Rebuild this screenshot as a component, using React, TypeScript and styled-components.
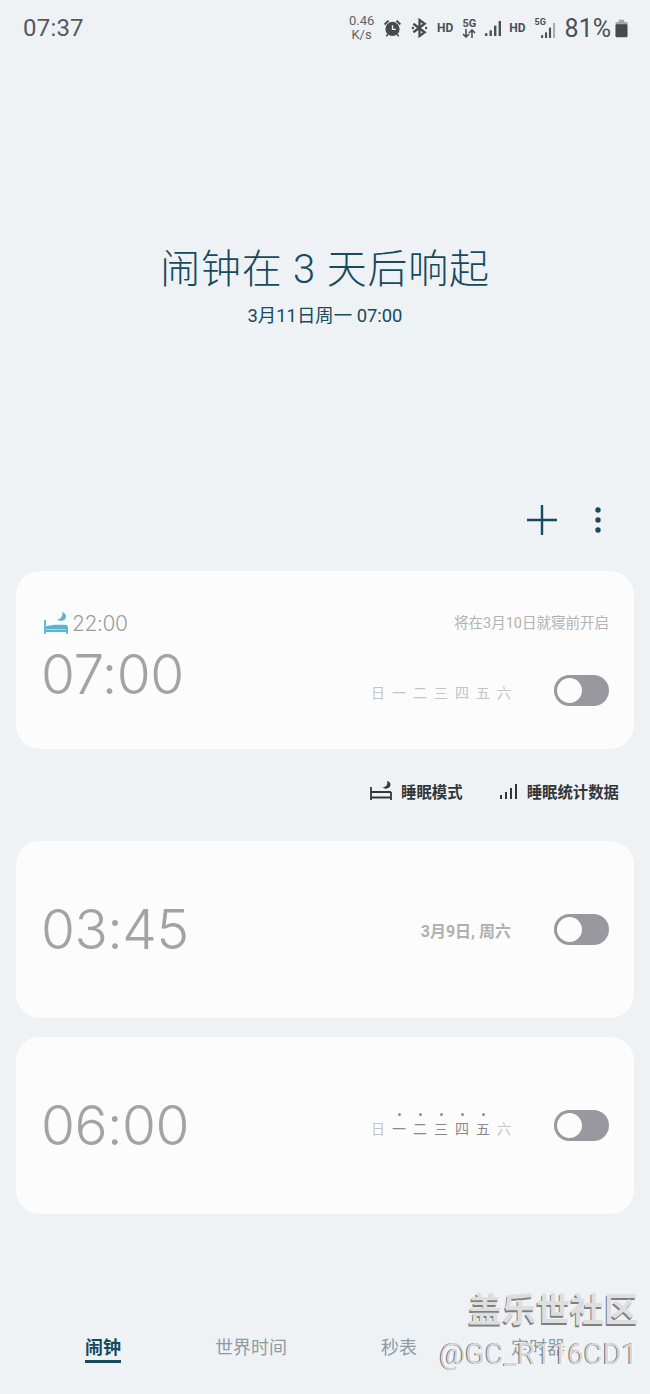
import styled, { createGlobalStyle } from "styled-components";

const GlobalStyle = createGlobalStyle`
  html, body {
    margin: 0;
    padding: 0;
    background: #eef2f5;
  }
`;

const CJK = `Roboto, "Noto Sans CJK SC", sans-serif`;

const Page = styled.div`
  position: relative;
  width: 650px;
  height: 1394px;
  overflow: hidden;
  background: #eef2f5;
  font-family: ${CJK};
`;

const StatusBar = styled.div`
  height: 56px;
  display: flex;
  align-items: center;
  justify-content: space-between;
  padding: 0 22px 0 23px;
  color: #55595d;
`;

const Clock = styled.div`
  font-size: 24px;
  letter-spacing: 0.2px;
`;

const StatusIcons = styled.div`
  display: flex;
  align-items: center;
  gap: 9px;
`;

const Speed = styled.div`
  width: 25px;
  font-size: 13px;
  line-height: 14px;
  text-align: center;
  color: #5d6266;
`;

const Hd = styled.span<{ $tight?: boolean }>`
  font-size: 12px;
  font-weight: 700;
  color: #4b5054;
  margin-left: ${(p) => (p.$tight ? -2 : 0)}px;
`;

const Fiveg = styled.div`
  display: flex;
  flex-direction: column;
  align-items: center;
  font-size: 11px;
  line-height: 11px;
  font-weight: 700;
  color: #4b5054;
`;

const SignalCombo = styled.div`
  position: relative;
  width: 21px;
  height: 20px;
  display: flex;
  align-items: flex-end;
  justify-content: flex-end;
`;

const SmallFiveg = styled.span`
  position: absolute;
  left: 0;
  top: 0;
  font-size: 9px;
  line-height: 9px;
  font-weight: 700;
  color: #4b5054;
`;

const Battery = styled.span`
  font-size: 25px;
  color: #4b5054;
  margin-right: -5px;
`;

const Hero = styled.div`
  padding-top: 190px;
  text-align: center;
  color: #174a5c;
`;

const Title = styled.div`
  font-size: 40px;
  line-height: 48px;
  letter-spacing: 0.8px;
  font-weight: 300;
`;

const Subtitle = styled.div`
  margin-top: 10px;
  font-size: 18.4px;
  line-height: 24px;
`;

const Actions = styled.div`
  margin-top: 172px;
  height: 40px;
  display: flex;
  align-items: center;
  justify-content: flex-end;
  gap: 38px;
  padding-right: 49px;
`;

const CardList = styled.div`
  margin: 31px 16px 0;
`;

const Card = styled.div<{ $gap?: number }>`
  box-sizing: border-box;
  height: 177px;
  margin-top: ${(p) => p.$gap ?? 0}px;
  padding: 0 25px 0 25px;
  border-radius: 24px;
  background: #fcfcfc;
  display: flex;
  flex-direction: column;
  justify-content: center;
`;

const SleepCard = styled(Card)`
  height: 178px;
  justify-content: flex-start;
  padding-top: 40px;
`;

const SleepHeader = styled.div`
  display: flex;
  align-items: center;
  justify-content: space-between;
  height: 24px;
  margin-bottom: 9px;
  padding-left: 3px;
`;

const BedTime = styled.div`
  display: flex;
  align-items: center;
  gap: 4px;
  font-family: Inter, sans-serif;
  font-size: 21px;
  font-weight: 300;
  letter-spacing: -0.4px;
  color: #9c9c9c;
`;

const SleepNote = styled.div`
  font-size: 14.5px;
  color: #b2b2b2;
  margin-top: -3px;
`;

const AlarmRow = styled.div<{ $bottom?: boolean }>`
  display: flex;
  align-items: ${(p) => (p.$bottom ? "flex-end" : "center")};
  height: 62px;
`;

const AlarmTime = styled.div`
  flex: 1;
  align-self: flex-start;
  font-family: Inter, sans-serif;
  font-size: 55px;
  line-height: 60px;
  font-weight: 300;
  color: #a3a3a3;
  letter-spacing: -0.5px;
`;

const Days = styled.div<{ $lift?: number }>`
  display: flex;
  gap: 7px;
  margin-top: 6px;
  margin-bottom: ${(p) => p.$lift ?? 0}px;
`;

const Day = styled.div<{ $marked?: boolean }>`
  position: relative;
  width: 14px;
  font-size: 14px;
  line-height: 18px;
  text-align: center;
  color: ${(p) => (p.$marked ? "#8a8a8a" : "#c4c4c4")};

  &::before {
    content: "";
    display: ${(p) => (p.$marked ? "block" : "none")};
    position: absolute;
    top: -7px;
    left: 6px;
    width: 3px;
    height: 3px;
    border-radius: 50%;
    background: #8f8f8f;
  }
`;

const DateLabel = styled.div`
  font-size: 16px;
  font-weight: 700;
  color: #b0b0b0;
`;

const Toggle = styled.div`
  box-sizing: border-box;
  width: 55px;
  height: 31px;
  margin-left: 43px;
  padding: 3px;
  border-radius: 16px;
  background: #98989e;
`;

const Knob = styled.div`
  width: 25px;
  height: 25px;
  border-radius: 50%;
  background: #fcfcfc;
`;

const SleepLinks = styled.div`
  height: 92px;
  padding: 0 15px 8px 0;
  box-sizing: border-box;
  display: flex;
  align-items: center;
  justify-content: flex-end;
  gap: 37px;
`;

const SleepLink = styled.div`
  display: flex;
  align-items: center;
  gap: 9px;
  font-size: 15.4px;
  font-weight: 700;
  color: #333638;
`;

const Tabs = styled.div`
  margin-top: 116px;
  height: 36px;
  padding-left: 85px;
  display: flex;
  gap: 94px;
`;

const Tab = styled.div<{ $active?: boolean }>`
  position: relative;
  font-size: 18px;
  line-height: 36px;
  font-weight: ${(p) => (p.$active ? 700 : 400)};
  color: ${(p) => (p.$active ? "#174a5c" : "#8d9ba3")};

  &::after {
    content: "";
    display: ${(p) => (p.$active ? "block" : "none")};
    position: absolute;
    left: 0;
    right: 0;
    bottom: 3px;
    height: 3px;
    background: #174a5c;
  }
`;

const Watermark = styled.div`
  position: absolute;
  right: 12px;
  top: 1288px;
  text-align: right;
`;

const WatermarkTitle = styled.div`
  font-size: 34px;
  line-height: 44px;
  font-weight: 700;
  color: #dedede;
  text-shadow: -1px 2px 0 #7d7f81;
`;

const WatermarkUser = styled.div`
  font-size: 29px;
  line-height: 36px;
  margin-top: 4px;
  color: #d8d8d8;
  text-shadow: -1px 0 0 #6f7173, 1px 0 0 #ffffff;
`;

const AlarmClockIcon = () => (
  <svg width="19" height="20" viewBox="0 0 20 20" fill="#454a4e">
    <circle cx="10" cy="11" r="7.5" />
    <path d="M1 5.5 5 1.5 6.5 3 2.5 7ZM19 5.5 15 1.5 13.5 3 17.5 7ZM4.5 16 2.8 18.5 4 19.3 6 17ZM15.5 16 17.2 18.5 16 19.3 14 17Z" />
    <path d="M10 7v4.5h3.5" fill="none" stroke="#eef2f5" strokeWidth="1.4" />
  </svg>
);

const BluetoothIcon = () => (
  <svg width="17" height="20" viewBox="0 0 18 20" fill="none" stroke="#454a4e" strokeWidth="2.4">
    <path d="M2.5 5.5 14.5 14.5 9 18.5V1.5L14.5 5.5 2.5 14.5" />
    <circle cx="2" cy="10" r="1.3" fill="#454a4e" stroke="none" />
    <circle cx="16" cy="10" r="1.3" fill="#454a4e" stroke="none" />
  </svg>
);

const ArrowsIcon = () => (
  <svg width="14" height="9" viewBox="0 0 14 9" fill="none" stroke="#4b5054" strokeWidth="1.6">
    <path d="M4 0v8M1 5l3 3 3-3M10 9V1M7 4l3-3 3 3" />
  </svg>
);

const SignalIcon = ({ dim, small }: { dim?: boolean; small?: boolean }) => (
  <svg width={small ? 15 : 17} height={16} viewBox="0 0 17 17" preserveAspectRatio="none" fill="#4b5054">
    <rect x="0" y="14" width="2.4" height="3" />
    <rect x="4.5" y="11" width="2.4" height="6" />
    <rect x="9" y="6" width="2.4" height="11" />
    <rect x="13.6" y="1" width="2.4" height="16" fill={dim ? "#a9adb0" : "#4b5054"} />
  </svg>
);

const BatteryIcon = () => (
  <svg width="13" height="19" viewBox="0 0 14 19">
    <rect x="4" y="0" width="6" height="2.5" fill="#a4a7aa" />
    <rect x="0.5" y="2.5" width="13" height="3.5" rx="1" fill="#a4a7aa" />
    <rect x="0.5" y="5" width="13" height="14" rx="1.5" fill="#454a4e" />
  </svg>
);

const PlusIcon = () => (
  <svg width="30" height="30" viewBox="0 0 30 30" stroke="#174a5c" strokeWidth="2.4">
    <path d="M15 0v30M0 15h30" />
  </svg>
);

const MoreIcon = () => (
  <svg width="6" height="26" viewBox="0 0 6 26" fill="#174a5c">
    <circle cx="3" cy="3" r="2.7" />
    <circle cx="3" cy="13" r="2.7" />
    <circle cx="3" cy="23" r="2.7" />
  </svg>
);

const SleepBedIcon = () => (
  <svg width="24" height="22" viewBox="0 0 24 22" fill="none" stroke="#58b4d2" strokeWidth="1.8">
    <path d="M1 8v14M23 14v8M1 19h22" />
    <path d="M2 17.5V14.5C6 12.5 15 12.5 23 13v4.5Z" fill="#58b4d2" stroke="none" />
    <path d="M18 0c1.5 4-1 7-5 7.5 3 2.5 9 1.5 9-3.5 0-1.5-1.5-3.5-4-4Z" fill="#58b4d2" stroke="none" />
  </svg>
);

const LinkBedIcon = () => (
  <svg width="22" height="20" viewBox="0 0 22 20" fill="none" stroke="#333638" strokeWidth="1.8">
    <path d="M1 6v13M21 11v8M1 16.5h20M1 11h20" />
    <path d="M17 0c1.2 3.5-.8 6-4.5 6.5 2.8 2.2 8 1.2 8-3 0-1.4-1.2-3-3.5-3.5Z" fill="#333638" stroke="none" />
  </svg>
);

const StatsIcon = () => (
  <svg width="18" height="17" viewBox="0 0 18 17" fill="#333638">
    <rect x="0" y="12" width="2" height="4" />
    <rect x="5" y="9" width="2" height="7" />
    <rect x="10" y="5" width="2" height="11" />
    <rect x="15" y="1" width="2" height="15" />
  </svg>
);

const DAY_NAMES = ["日", "一", "二", "三", "四", "五", "六"];

const DayRow = ({ marked, lift }: { marked?: boolean; lift?: number }) => (
  <Days $lift={lift}>
    {DAY_NAMES.map((name, i) => (
      <Day key={name} $marked={marked && i > 0 && i < 6}>
        {name}
      </Day>
    ))}
  </Days>
);

const Switch = () => (
  <Toggle>
    <Knob />
  </Toggle>
);

export default function App() {
  return (
    <Page>
      <GlobalStyle />
      <StatusBar>
        <Clock>07:37</Clock>
        <StatusIcons>
          <Speed>
            0.46
            <br />
            K/s
          </Speed>
          <AlarmClockIcon />
          <BluetoothIcon />
          <Hd>HD</Hd>
          <Fiveg>
            5G
            <ArrowsIcon />
          </Fiveg>
          <SignalIcon />
          <Hd $tight>HD</Hd>
          <SignalCombo>
            <SmallFiveg>5G</SmallFiveg>
            <SignalIcon dim small />
          </SignalCombo>
          <Battery>81%</Battery>
          <BatteryIcon />
        </StatusIcons>
      </StatusBar>

      <Hero>
        <Title>闹钟在 3 天后响起</Title>
        <Subtitle>3月11日周一 07:00</Subtitle>
      </Hero>

      <Actions>
        <PlusIcon />
        <MoreIcon />
      </Actions>

      <CardList>
        <SleepCard>
          <SleepHeader>
            <BedTime>
              <SleepBedIcon />
              22:00
            </BedTime>
            <SleepNote>将在3月10日就寝前开启</SleepNote>
          </SleepHeader>
          <AlarmRow $bottom>
            <AlarmTime>07:00</AlarmTime>
            <DayRow lift={4} />
            <Switch />
          </AlarmRow>
        </SleepCard>

        <SleepLinks>
          <SleepLink>
            <LinkBedIcon />
            睡眠模式
          </SleepLink>
          <SleepLink>
            <StatsIcon />
            睡眠统计数据
          </SleepLink>
        </SleepLinks>

        <Card>
          <AlarmRow>
            <AlarmTime>03:45</AlarmTime>
            <DateLabel>3月9日, 周六</DateLabel>
            <Switch />
          </AlarmRow>
        </Card>

        <Card $gap={19}>
          <AlarmRow>
            <AlarmTime>06:00</AlarmTime>
            <DayRow marked />
            <Switch />
          </AlarmRow>
        </Card>
      </CardList>

      <Tabs>
        <Tab $active>闹钟</Tab>
        <Tab>世界时间</Tab>
        <Tab>秒表</Tab>
        <Tab>定时器</Tab>
      </Tabs>

      <Watermark>
        <WatermarkTitle>盖乐世社区</WatermarkTitle>
        <WatermarkUser>@GC_R116CD1</WatermarkUser>
      </Watermark>
    </Page>
  );
}
